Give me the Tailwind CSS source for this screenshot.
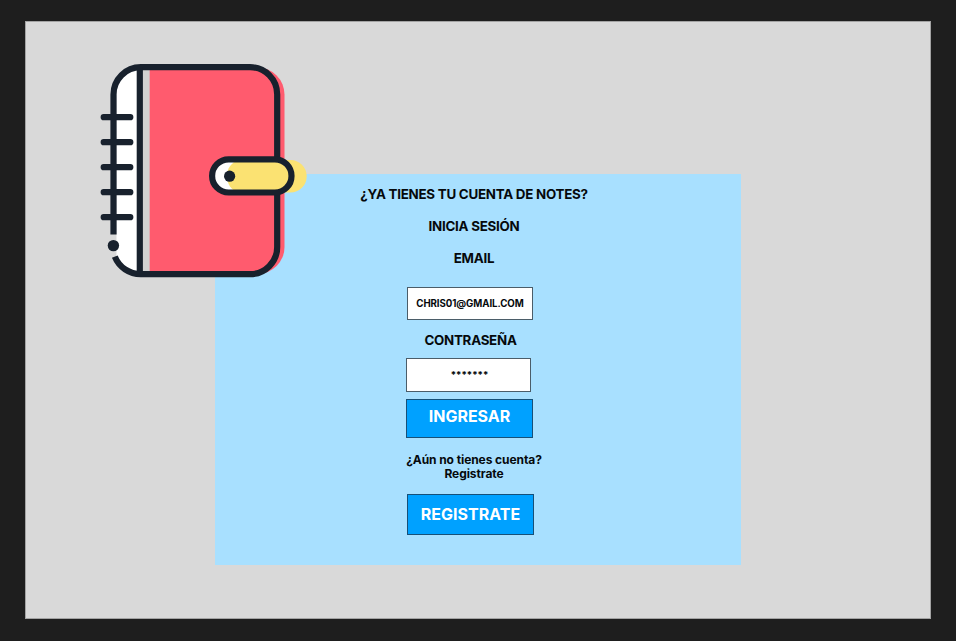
<!DOCTYPE html>
<html lang="es">
<head>
<meta charset="utf-8">
<title>Notes</title>
<script src="https://cdn.jsdelivr.net/npm/@tailwindcss/browser@4"></script>
</head>
<body class="h-[641px] w-[956px] overflow-hidden bg-[#1e1e1e] pt-[21px] pl-[25px] font-['Inter',sans-serif] font-bold text-[#05090c]">
<main class="relative h-[598px] w-[906px] border border-[#a3a3a3] bg-[#d9d9d9] pt-[152px] pl-[189px]">
  <form class="flex h-[391px] w-[526px] flex-col bg-[#a8e0ff] pt-1">
    <div class="w-[518px] text-center text-[13.33px] leading-8 tracking-[-0.24px]">
      <h1>¿YA TIENES TU CUENTA DE NOTES?</h1>
      <h2>INICIA SESIÓN</h2>
      <p>EMAIL</p>
    </div>
    <div class="mt-[13px] ml-[192px] flex h-[33px] w-[126px] items-center justify-center border border-[#4b5d69] bg-white pt-0.5 text-[9.7px] tracking-[-0.07px]">CHRIS01@GMAIL.COM</div>
    <p class="w-[511px] pt-px text-center text-[13.33px] leading-[38px] tracking-[-0.24px]">CONTRASEÑA</p>
    <div class="-mt-px ml-[191px] flex h-[34px] w-[125px] items-center justify-center border border-[#4b5d69] bg-white pl-0.5 text-[9.6px]">*******</div>
    <button type="button" class="mt-[7px] ml-[191px] h-[39px] w-[127px] border border-[#175078] bg-[#00a1ff] pb-[5px] text-[16px] leading-none text-white">INGRESAR</button>
    <p class="mt-[15px] w-[518px] text-center text-[12px] leading-[14px] tracking-[-0.08px]">¿Aún no tienes cuenta?<br>Registrate</p>
    <button type="button" class="mt-[13px] ml-[192px] h-[41px] w-[127px] border border-[#175078] bg-[#00a1ff] pb-px text-[16px] leading-none text-white">REGISTRATE</button>
  </form>
  <svg class="absolute top-[33px] left-[64px]" width="230" height="235" viewBox="90 55 230 235" fill="none">
    <path d="M139 67h-2C124 69 116.5 79 116.5 94V256C121 266 128 272 139 274z" fill="#fff"/>
    <path d="M143 69h7v203h-7z" fill="#d2d2d2"/>
    <path d="M149.7 67.5H257.500A27 27 0 0 1 284.500 94.500V247A27 27 0 0 1 257.500 274H149.700z" fill="#ff5b6e"/>
    <g stroke="#18212d" stroke-width="6.2">
      <path d="M113.500 234.500V94.500A27.300 27.300 0 0 1 140.800 67.200H250A27.200 27.200 0 0 1 277.200 94.400V247A27.200 27.200 0 0 1 250 274.200H140.800A28 28 0 0 1 114.800 256.700"/>
      <path d="M139.800 67V274"/>
      <path stroke-linecap="round" d="M103.700 117.200H130.300M103.700 142.200H130.300M103.700 167.200H130.300M103.700 192.200H130.300M103.700 217.200H130.300"/>
    </g>
    <circle cx="113.400" cy="245.600" r="5.700" fill="#18212d"/>
    <rect x="212" y="159.300" width="79.500" height="33.300" rx="16.650" fill="#fff"/>
    <path d="M240 160H290.400A16.300 16.300 0 0 1 290.400 192.600H240C231 191 227 184 227 176.300S231 162 240 160z" fill="#fbe272"/>
    <rect x="212.100" y="159.300" width="79.400" height="33.200" rx="16.600" stroke="#18212d" stroke-width="6.200"/>
    <circle cx="229.600" cy="176.200" r="5.600" fill="#18212d"/>
  </svg>
</main>
</body>
</html>
